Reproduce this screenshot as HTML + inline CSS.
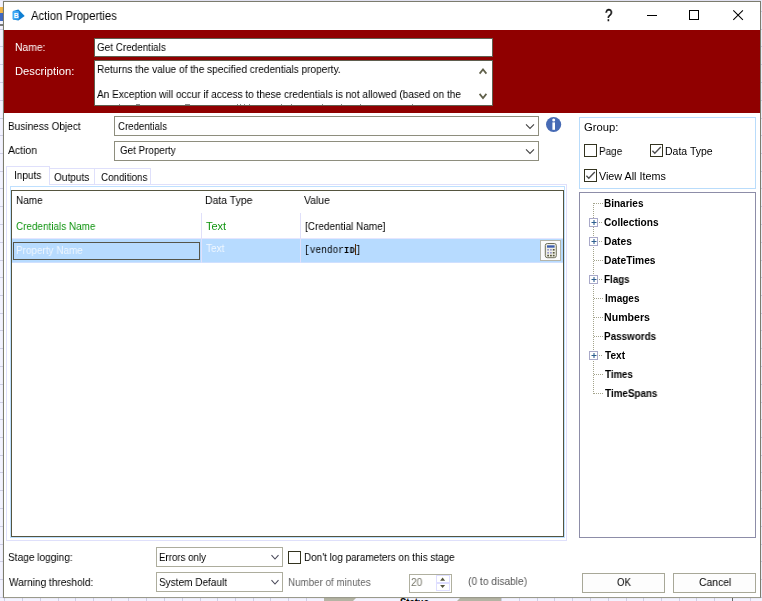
<!DOCTYPE html>
<html><head><meta charset="utf-8">
<style>
*{margin:0;padding:0;box-sizing:border-box}
html,body{width:762px;height:601px;overflow:hidden;background:#f2f2ff}
body{position:relative;font-family:"Liberation Sans",sans-serif;font-size:11px;color:#000}
.a{position:absolute}
.x{position:absolute;white-space:nowrap;line-height:16px;transform-origin:0 0;will-change:transform}
.box{position:absolute;background:#fff;border:1px solid #8e8e7e}
#bg{position:absolute;left:0;top:0;width:762px;height:601px;background:#f3f3ff}
#win{position:absolute;left:3px;top:1px;width:758px;height:597px;background:#fff;border:1px solid #7c7c6e;border-bottom-color:#9a9a8c;box-shadow:0 0 1px rgba(0,0,0,.2)}
#red{position:absolute;left:4px;top:30px;width:756px;height:83px;background:#900000}
.cb{position:absolute;width:13px;height:13px;border:1px solid #33331f;background:#fff}
.vl{position:absolute;width:1px;background:#d2d2e8}
.hl{position:absolute;height:1px;background:#d2d2e8}
</style></head><body>
<div id="bg"></div>
<svg class="a" style="left:0;top:0" width="762" height="601" id="gridsvg"><rect x="4" y="0" width="1" height="601" fill="#cfcfe6"/><rect x="22" y="0" width="1" height="601" fill="#cfcfe6"/><rect x="40" y="0" width="1" height="601" fill="#cfcfe6"/><rect x="58" y="0" width="1" height="601" fill="#cfcfe6"/><rect x="75" y="0" width="1" height="601" fill="#cfcfe6"/><rect x="93" y="0" width="1" height="601" fill="#cfcfe6"/><rect x="111" y="0" width="1" height="601" fill="#cfcfe6"/><rect x="128" y="0" width="1" height="601" fill="#cfcfe6"/><rect x="146" y="0" width="1" height="601" fill="#cfcfe6"/><rect x="164" y="0" width="1" height="601" fill="#cfcfe6"/><rect x="182" y="0" width="1" height="601" fill="#cfcfe6"/><rect x="200" y="0" width="1" height="601" fill="#cfcfe6"/><rect x="217" y="0" width="1" height="601" fill="#cfcfe6"/><rect x="235" y="0" width="1" height="601" fill="#cfcfe6"/><rect x="253" y="0" width="1" height="601" fill="#cfcfe6"/><rect x="270" y="0" width="1" height="601" fill="#cfcfe6"/><rect x="288" y="0" width="1" height="601" fill="#cfcfe6"/><rect x="306" y="0" width="1" height="601" fill="#cfcfe6"/><rect x="324" y="0" width="1" height="601" fill="#cfcfe6"/><rect x="342" y="0" width="1" height="601" fill="#cfcfe6"/><rect x="359" y="0" width="1" height="601" fill="#cfcfe6"/><rect x="377" y="0" width="1" height="601" fill="#cfcfe6"/><rect x="395" y="0" width="1" height="601" fill="#cfcfe6"/><rect x="412" y="0" width="1" height="601" fill="#cfcfe6"/><rect x="430" y="0" width="1" height="601" fill="#cfcfe6"/><rect x="448" y="0" width="1" height="601" fill="#cfcfe6"/><rect x="466" y="0" width="1" height="601" fill="#cfcfe6"/><rect x="484" y="0" width="1" height="601" fill="#cfcfe6"/><rect x="501" y="0" width="1" height="601" fill="#cfcfe6"/><rect x="519" y="0" width="1" height="601" fill="#cfcfe6"/><rect x="537" y="0" width="1" height="601" fill="#cfcfe6"/><rect x="554" y="0" width="1" height="601" fill="#cfcfe6"/><rect x="572" y="0" width="1" height="601" fill="#cfcfe6"/><rect x="590" y="0" width="1" height="601" fill="#cfcfe6"/><rect x="608" y="0" width="1" height="601" fill="#cfcfe6"/><rect x="626" y="0" width="1" height="601" fill="#cfcfe6"/><rect x="643" y="0" width="1" height="601" fill="#cfcfe6"/><rect x="661" y="0" width="1" height="601" fill="#cfcfe6"/><rect x="679" y="0" width="1" height="601" fill="#cfcfe6"/><rect x="696" y="0" width="1" height="601" fill="#cfcfe6"/><rect x="714" y="0" width="1" height="601" fill="#cfcfe6"/><rect x="732" y="0" width="1" height="601" fill="#cfcfe6"/><rect x="750" y="0" width="1" height="601" fill="#cfcfe6"/><rect x="0" y="11" width="762" height="1" fill="#cfcfe6"/><rect x="0" y="29" width="762" height="1" fill="#cfcfe6"/><rect x="0" y="46" width="762" height="1" fill="#cfcfe6"/><rect x="0" y="64" width="762" height="1" fill="#cfcfe6"/><rect x="0" y="82" width="762" height="1" fill="#cfcfe6"/><rect x="0" y="100" width="762" height="1" fill="#cfcfe6"/><rect x="0" y="118" width="762" height="1" fill="#cfcfe6"/><rect x="0" y="135" width="762" height="1" fill="#cfcfe6"/><rect x="0" y="153" width="762" height="1" fill="#cfcfe6"/><rect x="0" y="171" width="762" height="1" fill="#cfcfe6"/><rect x="0" y="188" width="762" height="1" fill="#cfcfe6"/><rect x="0" y="206" width="762" height="1" fill="#cfcfe6"/><rect x="0" y="224" width="762" height="1" fill="#cfcfe6"/><rect x="0" y="242" width="762" height="1" fill="#cfcfe6"/><rect x="0" y="260" width="762" height="1" fill="#cfcfe6"/><rect x="0" y="277" width="762" height="1" fill="#cfcfe6"/><rect x="0" y="295" width="762" height="1" fill="#cfcfe6"/><rect x="0" y="313" width="762" height="1" fill="#cfcfe6"/><rect x="0" y="330" width="762" height="1" fill="#cfcfe6"/><rect x="0" y="348" width="762" height="1" fill="#cfcfe6"/><rect x="0" y="366" width="762" height="1" fill="#cfcfe6"/><rect x="0" y="384" width="762" height="1" fill="#cfcfe6"/><rect x="0" y="402" width="762" height="1" fill="#cfcfe6"/><rect x="0" y="419" width="762" height="1" fill="#cfcfe6"/><rect x="0" y="437" width="762" height="1" fill="#cfcfe6"/><rect x="0" y="455" width="762" height="1" fill="#cfcfe6"/><rect x="0" y="472" width="762" height="1" fill="#cfcfe6"/><rect x="0" y="490" width="762" height="1" fill="#cfcfe6"/><rect x="0" y="508" width="762" height="1" fill="#cfcfe6"/><rect x="0" y="526" width="762" height="1" fill="#cfcfe6"/><rect x="0" y="544" width="762" height="1" fill="#cfcfe6"/><rect x="0" y="561" width="762" height="1" fill="#cfcfe6"/><rect x="0" y="579" width="762" height="1" fill="#cfcfe6"/><rect x="0" y="597" width="762" height="1" fill="#cfcfe6"/></svg>
<svg class="a" style="left:0;top:596px" width="762" height="5" viewBox="0 0 762 5"><polygon points="324,0 501,0 501,5 324,5" fill="#b4b4a4"/><polygon points="358,0 462,0 457,5 353,5" fill="#f4f4ff"/><rect x="732" y="0" width="1" height="5" fill="#666"/></svg>
<div class="a" style="left:400px;top:596px;font-size:11px;font-weight:bold;line-height:12px;transform:scaleX(0.86);transform-origin:0 0;white-space:nowrap">Status</div>
<div class="a" style="left:0;top:7px;width:3px;height:8px;background:#f0b64a"></div>
<div class="a" style="left:0;top:13px;width:3px;height:8px;background:#3f68c0"></div>
<div class="a" style="left:0;top:24px;width:3px;height:2px;background:#7a7a7a"></div>
<div class="a" style="left:0;top:0;width:762px;height:1px;background:#e9e9f8"></div>
<div id="win"></div>
<div id="red"></div>

<!-- title icons -->
<svg class="a" style="left:12px;top:9px" width="14" height="13" viewBox="0 0 14 13"><path d="M6.4 0.6 L12.7 7 L6.4 11.6 L0.9 10.4 L0.9 2.1 Z" fill="#0f7fd2"/><rect x="0.6" y="2" width="6.4" height="8.5" rx="1.2" fill="#3fa6f4"/><text x="1.7" y="9" font-family="Liberation Sans,sans-serif" font-size="6.8" font-weight="bold" fill="#fff">B</text></svg>
<div class="a" style="left:647px;top:15px;width:10px;height:1px;background:#000"></div>
<div class="a" style="left:689px;top:10px;width:10px;height:10px;border:1px solid #000"></div>
<svg class="a" style="left:732px;top:9px" width="12" height="12" viewBox="0 0 12 12"><path d="M1.3 1.3 L10.9 10.9 M10.9 1.3 L1.3 10.9" stroke="#000" stroke-width="1.05" fill="none"/></svg>

<!-- header inputs -->
<div class="box" style="left:94px;top:38px;width:399px;height:19px;border-color:#5f5f50"></div>
<div class="box" style="left:94px;top:60px;width:399px;height:46px;border-color:#5f5f50"></div>
<svg class="a" style="left:478px;top:66px" width="10" height="36" viewBox="0 0 10 36"><path d="M1.6 7.6 L5 3.4 L8.4 7.6 M1.6 27.9 L5 32.1 L8.4 27.9" stroke="#60604a" stroke-width="1.7" fill="none"/></svg>
<!-- clipped 3rd line hints -->
<svg class="a" style="left:95px;top:104px" width="396" height="1" viewBox="95 0 396 1"><rect x="119" y="0" width="1" height="1" fill="#8a8a8a"/><rect x="136" y="0" width="4" height="1" fill="#8a8a8a"/><rect x="185" y="0" width="5" height="1" fill="#8a8a8a"/><rect x="237" y="0" width="1" height="1" fill="#8a8a8a"/><rect x="240" y="0" width="1" height="1" fill="#8a8a8a"/><rect x="244" y="0" width="1" height="1" fill="#8a8a8a"/><rect x="249" y="0" width="1" height="1" fill="#8a8a8a"/><rect x="281" y="0" width="1" height="1" fill="#8a8a8a"/><rect x="291" y="0" width="1" height="1" fill="#8a8a8a"/><rect x="322" y="0" width="1" height="1" fill="#8a8a8a"/><rect x="341" y="0" width="1" height="1" fill="#8a8a8a"/><rect x="360" y="0" width="1" height="1" fill="#8a8a8a"/><rect x="412" y="0" width="1" height="1" fill="#8a8a8a"/></svg>

<!-- combos -->
<div class="box" style="left:114px;top:116px;width:425px;height:20px"></div>
<div class="box" style="left:114px;top:141px;width:425px;height:20px"></div>
<svg class="a" style="left:525px;top:122px" width="10" height="8" viewBox="0 0 10 8"><path d="M1 2.4 L5 6.4 L9 2.4" stroke="#444" stroke-width="1.1" fill="none"/></svg>
<svg class="a" style="left:525px;top:147px" width="10" height="8" viewBox="0 0 10 8"><path d="M1 2.4 L5 6.4 L9 2.4" stroke="#444" stroke-width="1.1" fill="none"/></svg>
<svg class="a" style="left:545px;top:116px" width="17" height="17" viewBox="0 0 17 17"><circle cx="8.6" cy="8.5" r="7.6" fill="#476bb5"/><rect x="7.4" y="6.4" width="2.6" height="7.4" fill="#fff"/><circle cx="8.7" cy="3.9" r="1.5" fill="#fff"/></svg>

<!-- tabs -->
<div class="a" style="left:6px;top:184px;width:561px;height:357px;border:1px solid #dfe0fb"></div>
<div class="a" style="left:49px;top:168px;width:46px;height:17px;border:1px solid #dfe0fb;border-bottom:none;border-left:none"></div>
<div class="a" style="left:94px;top:168px;width:57px;height:17px;border:1px solid #dfe0fb;border-bottom:none"></div>
<div class="a" style="left:6px;top:166px;width:44px;height:19px;border:1px solid #dfe0fb;border-bottom:none;background:#fff"></div>
<div class="a" style="left:10px;top:186px;width:555px;height:352px;border:1px solid #bfe0ff"></div>
<div class="a" style="left:11px;top:190px;width:553px;height:347px;border:1px solid #55553f;background:#fff"></div>

<!-- grid -->
<div class="a" style="left:12px;top:238px;width:551px;height:25px;background:#b7dbff"></div>
<div class="hl" style="left:12px;top:238px;width:551px;background:#e4e6ff"></div>
<div class="hl" style="left:12px;top:262px;width:551px;background:#cfe0ff"></div>
<div class="vl" style="left:201px;top:213px;height:50px;background:#e0e0fa"></div>
<div class="vl" style="left:300px;top:213px;height:50px;background:#e0e0fa"></div>
<div class="a" style="left:13px;top:242px;width:187px;height:18px;border:1px solid #55554a;background:#b7dbff"></div>
<div class="a" style="left:355px;top:244px;width:1px;height:11px;background:#5a2a00"></div>
<!-- calc button -->
<div class="a" style="left:540px;top:240px;width:21px;height:21px;background:#fbfbfb;border:1px solid #b4b4a8"></div>
<svg class="a" style="left:544px;top:242px" width="14" height="17" viewBox="0 0 14 17"><rect x="1.3" y="1.5" width="11" height="14.2" rx="2" ry="2" fill="#f0f0e6" stroke="#6e6e5c" stroke-width="1"/><rect x="3" y="3.3" width="7.6" height="2.4" fill="#3f5fb0"/><g fill="#9a9ac8"><rect x="3.2" y="7" width="1.8" height="1.6"/><rect x="6" y="7" width="1.8" height="1.6"/><rect x="3.2" y="10" width="1.8" height="1.6"/><rect x="6" y="10" width="1.8" height="1.6"/></g><g fill="#55553c"><rect x="8.8" y="7" width="1.8" height="1.6"/><rect x="8.8" y="10" width="1.8" height="1.6"/><rect x="3.2" y="12.8" width="1.8" height="1.6"/><rect x="6" y="12.8" width="1.8" height="1.6"/><rect x="8.8" y="12.8" width="1.8" height="1.6"/></g></svg>

<!-- right panel -->
<div class="a" style="left:579px;top:117px;width:177px;height:72px;border:1px solid #b9dcfb"></div>
<div class="cb" style="left:584px;top:144px"></div>
<div class="cb" style="left:650px;top:144px"></div>
<div class="cb" style="left:584px;top:169px"></div>
<svg class="a" style="left:650px;top:144px" width="13" height="13" viewBox="0 0 13 13"><path d="M2.4 6.8 L4.8 9.2 L10.8 3" stroke="#4c4c4c" stroke-width="1.35" fill="none"/></svg>
<svg class="a" style="left:584px;top:169px" width="13" height="13" viewBox="0 0 13 13"><path d="M2.4 6.8 L4.8 9.2 L10.8 3" stroke="#4c4c4c" stroke-width="1.35" fill="none"/></svg>
<div class="a" style="left:579px;top:192px;width:177px;height:346px;border:1px solid #8d8da8;background:#fff"></div>
<svg class="a" style="left:585px;top:195px" width="30" height="210" id="tree"><line x1="8.5" y1="8" x2="8.5" y2="199" stroke="#a4a48c" stroke-width="1" stroke-dasharray="1 1"/><line x1="9" y1="8.5" x2="18" y2="8.5" stroke="#a4a48c" stroke-width="1" stroke-dasharray="1 1"/><line x1="14" y1="27.5" x2="18" y2="27.5" stroke="#a4a48c" stroke-width="1" stroke-dasharray="1 1"/><rect x="4.5" y="23.5" width="8" height="8" fill="#fff" stroke="#a9a9c9"/><path d="M6.5 27.5 h5 M9 25 v5" stroke="#2e5f8f" stroke-width="1.1" fill="none"/><line x1="14" y1="46.5" x2="18" y2="46.5" stroke="#a4a48c" stroke-width="1" stroke-dasharray="1 1"/><rect x="4.5" y="42.5" width="8" height="8" fill="#fff" stroke="#a9a9c9"/><path d="M6.5 46.5 h5 M9 44 v5" stroke="#2e5f8f" stroke-width="1.1" fill="none"/><line x1="9" y1="65.5" x2="18" y2="65.5" stroke="#a4a48c" stroke-width="1" stroke-dasharray="1 1"/><line x1="14" y1="84.5" x2="18" y2="84.5" stroke="#a4a48c" stroke-width="1" stroke-dasharray="1 1"/><rect x="4.5" y="80.5" width="8" height="8" fill="#fff" stroke="#a9a9c9"/><path d="M6.5 84.5 h5 M9 82 v5" stroke="#2e5f8f" stroke-width="1.1" fill="none"/><line x1="9" y1="103.5" x2="18" y2="103.5" stroke="#a4a48c" stroke-width="1" stroke-dasharray="1 1"/><line x1="9" y1="122.5" x2="18" y2="122.5" stroke="#a4a48c" stroke-width="1" stroke-dasharray="1 1"/><line x1="9" y1="141.5" x2="18" y2="141.5" stroke="#a4a48c" stroke-width="1" stroke-dasharray="1 1"/><line x1="14" y1="160.5" x2="18" y2="160.5" stroke="#a4a48c" stroke-width="1" stroke-dasharray="1 1"/><rect x="4.5" y="156.5" width="8" height="8" fill="#fff" stroke="#a9a9c9"/><path d="M6.5 160.5 h5 M9 158 v5" stroke="#2e5f8f" stroke-width="1.1" fill="none"/><line x1="9" y1="179.5" x2="18" y2="179.5" stroke="#a4a48c" stroke-width="1" stroke-dasharray="1 1"/><line x1="9" y1="198.5" x2="18" y2="198.5" stroke="#a4a48c" stroke-width="1" stroke-dasharray="1 1"/></svg>

<!-- bottom -->
<div class="box" style="left:156px;top:547px;width:127px;height:20px;border-color:#adad9d"></div>
<div class="box" style="left:156px;top:572px;width:127px;height:20px;border-color:#adad9d"></div>
<svg class="a" style="left:270px;top:553px" width="10" height="8" viewBox="0 0 10 8"><path d="M1.5 2.2 L5 6 L8.5 2.2" stroke="#4a4a5a" stroke-width="1.1" fill="none"/></svg>
<svg class="a" style="left:270px;top:578px" width="10" height="8" viewBox="0 0 10 8"><path d="M1.5 2.2 L5 6 L8.5 2.2" stroke="#4a4a5a" stroke-width="1.1" fill="none"/></svg>
<div class="cb" style="left:288px;top:551px"></div>
<div class="box" style="left:409px;top:574px;width:43px;height:19px;border-color:#b0b0a0"></div>
<svg class="a" style="left:436px;top:575px" width="14" height="16" viewBox="0 0 14 16"><rect x="0.5" y="0.5" width="13" height="7" fill="none" stroke="#dedeff"/><rect x="0.5" y="8.5" width="13" height="7" fill="none" stroke="#dedeff"/><path d="M4.1 5.7 L6.6 2.6 L9.1 5.7 Z M4.1 10 L6.6 13.1 L9.1 10 Z" fill="#55553f"/></svg>
<div class="box" style="left:582px;top:573px;width:83px;height:20px;border-color:#a8a898;background:#fdfdfd"></div>
<div class="box" style="left:673px;top:573px;width:83px;height:20px;border-color:#a8a898;background:#fdfdfd"></div>

<div class="x" style="left:31.30px;top:8px;color:#000;font-family:'Liberation Sans',sans-serif;font-size:12px;transform:scaleX(0.9382);">Action Properties</div>
<div class="x" style="left:604.85px;top:8px;color:#000;font-family:'Liberation Sans',sans-serif;font-size:16px;transform:scaleX(0.8264);-webkit-text-stroke:0.35px #000;">?</div>
<div class="x" style="left:15.05px;top:39px;color:#fff;font-family:'Liberation Sans',sans-serif;font-size:10.5px;transform:scaleX(0.9816);">Name:</div>
<div class="x" style="left:14.62px;top:63px;color:#fff;font-family:'Liberation Sans',sans-serif;font-size:10.5px;transform:scaleX(1.0698);">Description:</div>
<div class="x" style="left:97.03px;top:39px;color:#000;font-family:'Liberation Sans',sans-serif;font-size:11px;transform:scaleX(0.9001);">Get Credentials</div>
<div class="x" style="left:97.09px;top:61px;color:#000;font-family:'Liberation Sans',sans-serif;font-size:11px;transform:scaleX(0.9189);">Returns the value of the specified credentials property.</div>
<div class="x" style="left:97.48px;top:86px;color:#000;font-family:'Liberation Sans',sans-serif;font-size:11px;transform:scaleX(0.9157);">An Exception will occur if access to these credentials is not allowed (based on the</div>
<div class="x" style="left:8.22px;top:118px;color:#000;font-family:'Liberation Sans',sans-serif;font-size:11px;transform:scaleX(0.9130);">Business Object</div>
<div class="x" style="left:117.57px;top:118px;color:#000;font-family:'Liberation Sans',sans-serif;font-size:11px;transform:scaleX(0.8794);">Credentials</div>
<div class="x" style="left:8.48px;top:142px;color:#000;font-family:'Liberation Sans',sans-serif;font-size:11px;transform:scaleX(0.9490);">Action</div>
<div class="x" style="left:119.54px;top:142px;color:#000;font-family:'Liberation Sans',sans-serif;font-size:11px;transform:scaleX(0.8930);">Get Property</div>
<div class="x" style="left:14.00px;top:167px;color:#000;font-family:'Liberation Sans',sans-serif;font-size:11px;transform:scaleX(0.9100);">Inputs</div>
<div class="x" style="left:54.05px;top:169px;color:#000;font-family:'Liberation Sans',sans-serif;font-size:11px;transform:scaleX(0.9157);">Outputs</div>
<div class="x" style="left:100.52px;top:169px;color:#000;font-family:'Liberation Sans',sans-serif;font-size:11px;transform:scaleX(0.8934);">Conditions</div>
<div class="x" style="left:15.62px;top:192px;color:#000;font-family:'Liberation Sans',sans-serif;font-size:11px;transform:scaleX(0.9075);">Name</div>
<div class="x" style="left:204.58px;top:192px;color:#000;font-family:'Liberation Sans',sans-serif;font-size:11px;transform:scaleX(0.9500);">Data Type</div>
<div class="x" style="left:304.32px;top:192px;color:#000;font-family:'Liberation Sans',sans-serif;font-size:11px;transform:scaleX(0.9448);">Value</div>
<div class="x" style="left:16.00px;top:218px;color:#109410;font-family:'Liberation Sans',sans-serif;font-size:11px;transform:scaleX(0.9011);">Credentials Name</div>
<div class="x" style="left:206.18px;top:218px;color:#109410;font-family:'Liberation Sans',sans-serif;font-size:11px;transform:scaleX(0.9927);">Text</div>
<div class="x" style="left:304.68px;top:218px;color:#000;font-family:'Liberation Sans',sans-serif;font-size:11px;transform:scaleX(0.9079);">[Credential Name]</div>
<div class="x" style="left:15.87px;top:242px;color:#eef6ff;font-family:'Liberation Sans',sans-serif;font-size:11px;transform:scaleX(0.9034);">Property Name</div>
<div class="x" style="left:206.41px;top:240px;color:#f2f8ff;font-family:'Liberation Sans',sans-serif;font-size:11px;transform:scaleX(0.9169);">Text</div>
<div class="x" style="left:303.55px;top:243px;color:#000;font-family:'Liberation Mono',monospace;font-size:10px;transform:scaleX(0.9522);">[vendor<span style="font-size:8.8px;font-weight:bold;letter-spacing:0.7px">ID</span>]</div>
<div class="x" style="left:583.92px;top:119px;color:#000;font-family:'Liberation Sans',sans-serif;font-size:10.5px;transform:scaleX(1.0716);">Group:</div>
<div class="x" style="left:598.75px;top:143px;color:#000;font-family:'Liberation Sans',sans-serif;font-size:10.5px;transform:scaleX(0.9448);">Page</div>
<div class="x" style="left:664.69px;top:143px;color:#000;font-family:'Liberation Sans',sans-serif;font-size:10.5px;transform:scaleX(0.9938);">Data Type</div>
<div class="x" style="left:599.24px;top:168px;color:#000;font-family:'Liberation Sans',sans-serif;font-size:10.5px;transform:scaleX(1.0244);">View All Items</div>
<div class="x" style="left:604.00px;top:196px;color:#000;font-family:'Liberation Sans',sans-serif;font-size:10px;font-weight:bold;transform:scaleX(1.0000);">Binaries</div>
<div class="x" style="left:604.16px;top:215px;color:#000;font-family:'Liberation Sans',sans-serif;font-size:10px;font-weight:bold;transform:scaleX(1.0125);">Collections</div>
<div class="x" style="left:603.90px;top:234px;color:#000;font-family:'Liberation Sans',sans-serif;font-size:10px;font-weight:bold;transform:scaleX(1.0221);">Dates</div>
<div class="x" style="left:603.90px;top:253px;color:#000;font-family:'Liberation Sans',sans-serif;font-size:10px;font-weight:bold;transform:scaleX(1.0220);">DateTimes</div>
<div class="x" style="left:603.68px;top:272px;color:#000;font-family:'Liberation Sans',sans-serif;font-size:10px;font-weight:bold;transform:scaleX(0.9779);">Flags</div>
<div class="x" style="left:604.75px;top:291px;color:#000;font-family:'Liberation Sans',sans-serif;font-size:10px;font-weight:bold;transform:scaleX(1.0000);">Images</div>
<div class="x" style="left:603.88px;top:310px;color:#000;font-family:'Liberation Sans',sans-serif;font-size:10px;font-weight:bold;transform:scaleX(1.0609);">Numbers</div>
<div class="x" style="left:603.75px;top:329px;color:#000;font-family:'Liberation Sans',sans-serif;font-size:10px;font-weight:bold;transform:scaleX(0.9858);">Passwords</div>
<div class="x" style="left:604.50px;top:348px;color:#000;font-family:'Liberation Sans',sans-serif;font-size:10px;font-weight:bold;transform:scaleX(1.0093);">Text</div>
<div class="x" style="left:604.52px;top:367px;color:#000;font-family:'Liberation Sans',sans-serif;font-size:10px;font-weight:bold;transform:scaleX(0.9676);">Times</div>
<div class="x" style="left:604.51px;top:386px;color:#000;font-family:'Liberation Sans',sans-serif;font-size:10px;font-weight:bold;transform:scaleX(0.9862);">TimeSpans</div>
<div class="x" style="left:7.80px;top:549px;color:#000;font-family:'Liberation Sans',sans-serif;font-size:11px;transform:scaleX(0.9194);">Stage logging:</div>
<div class="x" style="left:8.50px;top:574px;color:#000;font-family:'Liberation Sans',sans-serif;font-size:11px;transform:scaleX(0.9170);">Warning threshold:</div>
<div class="x" style="left:158.66px;top:549px;color:#000;font-family:'Liberation Sans',sans-serif;font-size:11px;transform:scaleX(0.8819);">Errors only</div>
<div class="x" style="left:159.16px;top:574px;color:#000;font-family:'Liberation Sans',sans-serif;font-size:11px;transform:scaleX(0.9123);">System Default</div>
<div class="x" style="left:303.73px;top:549px;color:#000;font-family:'Liberation Sans',sans-serif;font-size:11px;transform:scaleX(0.9010);">Don't log parameters on this stage</div>
<div class="x" style="left:287.64px;top:574px;color:#666;font-family:'Liberation Sans',sans-serif;font-size:11px;transform:scaleX(0.8895);">Number of minutes</div>
<div class="x" style="left:411.34px;top:574px;color:#77776a;font-family:'Liberation Sans',sans-serif;font-size:11px;transform:scaleX(0.9347);">20</div>
<div class="x" style="left:467.83px;top:573px;color:#555;font-family:'Liberation Sans',sans-serif;font-size:11px;transform:scaleX(0.9294);">(0 to disable)</div>
<div class="x" style="left:616.73px;top:574px;color:#000;font-family:'Liberation Sans',sans-serif;font-size:11px;transform:scaleX(0.8841);">OK</div>
<div class="x" style="left:698.93px;top:574px;color:#000;font-family:'Liberation Sans',sans-serif;font-size:11px;transform:scaleX(0.9437);">Cancel</div>
</body></html>
